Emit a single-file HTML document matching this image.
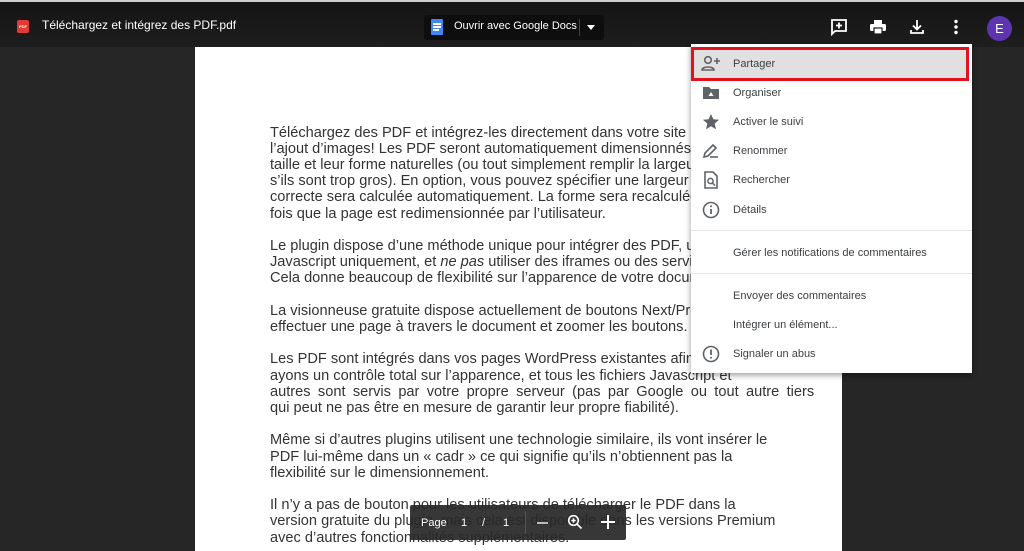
<!DOCTYPE html>
<html><head><meta charset="utf-8"><style>
*{margin:0;padding:0;box-sizing:border-box}
body{width:1024px;height:551px;overflow:hidden;background:#262626;font-family:"Liberation Sans",Arial,sans-serif;position:relative}
.topline{position:absolute;left:0;top:0;width:1024px;height:2px;background:#cfcfcf}
.bar{position:absolute;left:0;top:2px;width:1024px;height:45px;background:linear-gradient(#141414,#1e1e1e)}
.title{position:absolute;left:42px;top:16px;color:#fff;font-size:12px}
.pdfic{position:absolute;left:17px;top:18px;width:12px;height:13px;background:#e53935;border-radius:2px;color:#fff;font-size:4px;text-align:center;line-height:13px;font-weight:bold}
.open{position:absolute;left:424px;top:13px;width:180px;height:25px;background:#0e0e0e;border-radius:3px}
.open .doc{position:absolute;left:7px;top:4px;width:12px;height:16px;background:#4285f4;border-radius:1px}
.open .doc i{position:absolute;left:2px;width:8px;height:1.5px;background:#fff}
.open span{position:absolute;left:30px;top:5px;color:#fff;font-size:11px}
.open .sep{position:absolute;left:155px;top:4px;width:1px;height:17px;background:#444}
.open .car{position:absolute;left:163px;top:10px;border:4px solid transparent;border-top:5px solid #fff}
.ic{position:absolute;top:16px}
.av{position:absolute;left:987px;top:14px;width:25px;height:25px;border-radius:50%;background:#5e35b1;color:#fff;font-size:13px;text-align:center;line-height:25px}
.page{position:absolute;left:195px;top:47px;width:647px;height:504px;background:#fff;overflow:hidden}
.txt{position:absolute;left:75px;top:77.5px;width:800px;color:#333;font-size:14.6px;line-height:16.2px;white-space:nowrap}
.txt p{margin-bottom:16.2px}
.tb{position:absolute;left:410px;top:505px;width:216px;height:35px;background:rgba(40,40,40,.93);border-radius:2px;color:#fff;font-size:11px}
.tb span{position:absolute;top:12px}
.menu{position:absolute;left:691px;top:44px;width:281px;height:329px;background:#fff;box-shadow:0 2px 6px rgba(0,0,0,.4);font-size:11px;color:#3c4043}
.it{position:absolute;left:0;width:281px;height:29px}
.it span{position:absolute;left:42px;top:9px}
.it svg{position:absolute;left:10px;top:5px}
.hl{background:#e0e0e0;border:3px solid #e4121f;left:0;width:278px;top:3px;height:34px}
.hr{position:absolute;left:0;width:281px;height:1px;background:#e6e6e6}
</style></head><body>
<div class="topline"></div>
<div class="bar">
<div class="pdfic">PDF</div>
<div class="title">Téléchargez et intégrez des PDF.pdf</div>
<div class="open"><div class="doc"><i style="top:4px"></i><i style="top:7px"></i><i style="top:10px;width:6px"></i></div><span>Ouvrir avec Google Docs</span><div class="sep"></div><div class="car"></div></div>
<svg class="ic" style="left:830px" width="18" height="18" viewBox="0 0 18 18"><path d="M2 2h14v11H5l-3 3z" fill="none" stroke="#fff" stroke-width="1.8"/><path d="M9 4.5v6M6 7.5h6" stroke="#fff" stroke-width="1.8"/></svg>
<svg class="ic" style="left:869px" width="18" height="18" viewBox="0 0 18 18"><rect x="5" y="2" width="8" height="4" fill="#fff"/><rect x="1" y="6" width="16" height="7" rx="1.5" fill="#fff"/><rect x="5" y="10" width="8" height="6" fill="#fff" stroke="#1a1a1a" stroke-width="1.2"/></svg>
<svg class="ic" style="left:908px" width="18" height="18" viewBox="0 0 18 18"><path d="M9 2v9M5 7.5l4 4 4-4" fill="none" stroke="#fff" stroke-width="1.8"/><path d="M3 12v3h12v-3" fill="none" stroke="#fff" stroke-width="1.8"/></svg>
<svg class="ic" style="left:947px" width="18" height="18" viewBox="0 0 18 18"><circle cx="9" cy="3.5" r="1.7" fill="#fff"/><circle cx="9" cy="9" r="1.7" fill="#fff"/><circle cx="9" cy="14.5" r="1.7" fill="#fff"/></svg>
<div class="av">E</div>
</div>
<div class="page"><div class="txt">
<p>Téléchargez des PDF et intégrez-les directement dans votre site , tout aussi facilement que<br>l’ajout d’images! Les PDF seront automatiquement dimensionnés selon leur<br>taille et leur forme naturelles (ou tout simplement remplir la largeur disponible<br>s’ils sont trop gros). En option, vous pouvez spécifier une largeur et la hauteur<br>correcte sera calculée automatiquement. La forme sera recalculée chaque<br>fois que la page est redimensionnée par l’utilisateur.</p>
<p>Le plugin dispose d’une méthode unique pour intégrer des PDF, utilisant<br>Javascript uniquement, et <i>ne pas</i> utiliser des iframes ou des services tiers.<br>Cela donne beaucoup de flexibilité sur l’apparence de votre document.</p>
<p>La visionneuse gratuite dispose actuellement de boutons Next/Previous pour<br>effectuer une page à travers le document et zoomer les boutons.</p>
<p>Les PDF sont intégrés dans vos pages WordPress existantes afin que nous<br>ayons un contrôle total sur l’apparence, et tous les fichiers Javascript et<br><span style="word-spacing:3.3px">autres sont servis par votre propre serveur (pas par Google ou tout autre tiers</span><br>qui peut ne pas être en mesure de garantir leur propre fiabilité).</p>
<p>Même si d’autres plugins utilisent une technologie similaire, ils vont insérer le<br>PDF lui-même dans un « cadr » ce qui signifie qu’ils n’obtiennent pas la<br>flexibilité sur le dimensionnement.</p>
<p>Il n’y a pas de bouton pour les utilisateurs de télécharger le PDF dans la<br>version gratuite du plugin, mais cela est disponible dans les versions Premium<br>avec d’autres fonctionnalités supplémentaires.</p>
</div></div>
<div class="tb"><span style="left:11px">Page</span><span style="left:51px">1</span><span style="left:72px">/</span><span style="left:93px">1</span>
<div style="position:absolute;left:115px;top:6px;width:1px;height:23px;background:#555"></div>
<div style="position:absolute;left:127px;top:17px;width:11px;height:1.5px;background:#bbb"></div>
<svg style="position:absolute;left:157px;top:9px" width="16" height="16" viewBox="0 0 16 16"><circle cx="6.5" cy="6.5" r="4.8" fill="none" stroke="#fff" stroke-width="1.6"/><path d="M10 10l4.5 4.5M4.3 6.5h4.4M6.5 4.3v4.4" stroke="#fff" stroke-width="1.6"/></svg>
<svg style="position:absolute;left:191px;top:10px" width="14" height="14" viewBox="0 0 14 14"><path d="M7 0v14M0 7h14" stroke="#fff" stroke-width="2"/></svg>
</div>
<div class="menu">
<div class="it hl"><svg style="left:7px;top:4px" width="20" height="20" viewBox="0 0 20 20"><circle cx="7" cy="6" r="3.3" fill="none" stroke="#5f6368" stroke-width="1.6"/><path d="M1 16c0-4 12-4 12 0z" fill="none" stroke="#5f6368" stroke-width="1.6"/><path d="M16 4v6M13 7h6" stroke="#5f6368" stroke-width="1.6"/></svg><span style="left:39px;top:8px">Partager</span></div>
<div class="it" style="top:34px"><svg width="20" height="20" viewBox="0 0 20 20"><path d="M2 4h6l2 2h8v10H2z" fill="#5f6368"/><path d="M10 9l-2.5 4h5z" fill="#fff"/></svg><span>Organiser</span></div>
<div class="it" style="top:63px"><svg width="20" height="20" viewBox="0 0 20 20"><path d="M10 2l2.4 5.3 5.6.5-4.3 3.8 1.3 5.6L10 14.3 5 17.2l1.3-5.6L2 7.8l5.6-.5z" fill="#5f6368"/></svg><span>Activer le suivi</span></div>
<div class="it" style="top:92px"><svg width="20" height="20" viewBox="0 0 20 20"><path d="M3 16l1-4 8-8 3 3-8 8z" fill="none" stroke="#5f6368" stroke-width="1.6"/><path d="M9 16h8" stroke="#5f6368" stroke-width="1.6"/></svg><span>Renommer</span></div>
<div class="it" style="top:121px"><svg width="20" height="20" viewBox="0 0 20 20"><path d="M4 2h8l4 4v12H4z" fill="none" stroke="#5f6368" stroke-width="1.6"/><circle cx="9.5" cy="11" r="2.6" fill="none" stroke="#5f6368" stroke-width="1.5"/><path d="M11.5 13l2.5 2.5" stroke="#5f6368" stroke-width="1.5"/></svg><span>Rechercher</span></div>
<div class="it" style="top:151px"><svg width="20" height="20" viewBox="0 0 20 20"><circle cx="10" cy="10" r="7.5" fill="none" stroke="#5f6368" stroke-width="1.6"/><path d="M10 9v5" stroke="#5f6368" stroke-width="1.8"/><circle cx="10" cy="6.3" r="1" fill="#5f6368"/></svg><span>Détails</span></div>
<div class="hr" style="top:186px"></div>
<div class="it" style="top:194px"><span>Gérer les notifications de commentaires</span></div>
<div class="hr" style="top:229px"></div>
<div class="it" style="top:237px"><span>Envoyer des commentaires</span></div>
<div class="it" style="top:266px"><span>Intégrer un élément...</span></div>
<div class="it" style="top:295px"><svg width="20" height="20" viewBox="0 0 20 20"><circle cx="10" cy="10" r="7.5" fill="none" stroke="#5f6368" stroke-width="1.6"/><path d="M10 5.5v5.5" stroke="#5f6368" stroke-width="1.8"/><circle cx="10" cy="13.8" r="1" fill="#5f6368"/></svg><span>Signaler un abus</span></div>
</div>
</body></html>
